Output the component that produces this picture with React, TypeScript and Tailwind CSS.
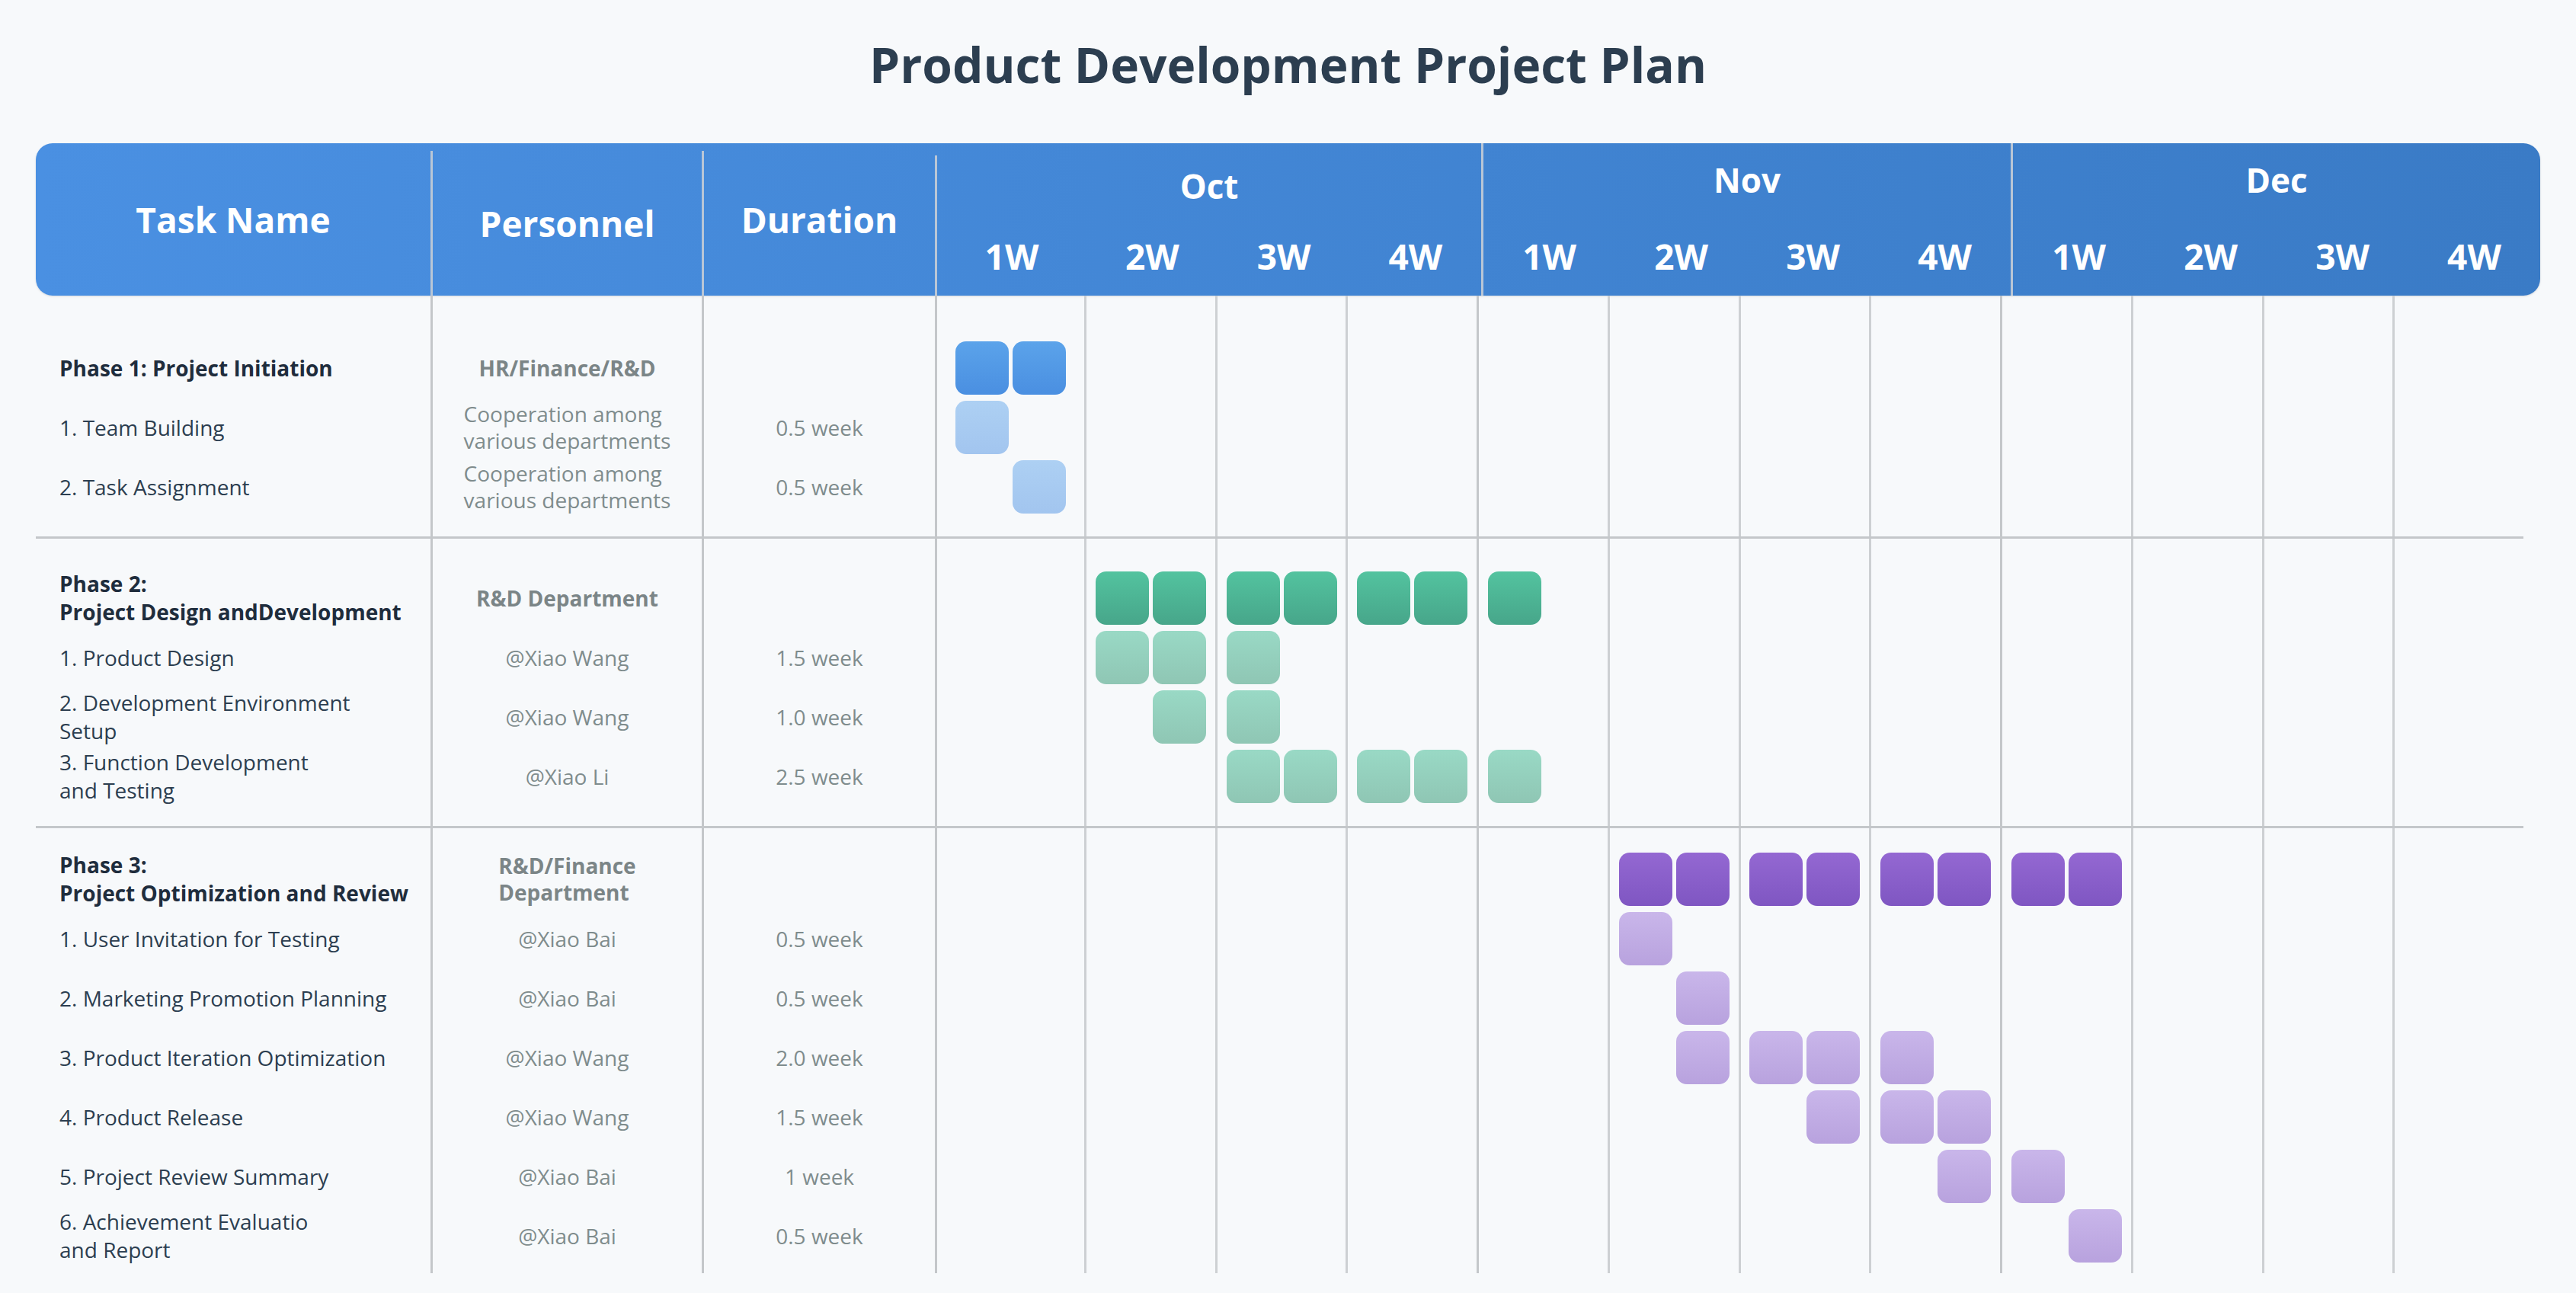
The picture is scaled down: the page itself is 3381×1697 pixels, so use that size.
type Row = { task: string; person: string; dur?: string; phase?: boolean; slots: number[] };
type Section = { dark: string; light: string; pad: string; rows: Row[] };

const SECTIONS: Section[] = [
  {
    dark: "bg-gradient-to-b from-[#5ba3ea] to-[#4a8fe1]",
    light: "bg-gradient-to-b from-[#add0f3] to-[#a2c5ef]",
    pad: "pt-[56px] pb-[26px]",
    rows: [
      { task: "Phase 1: Project Initiation", person: "HR/Finance/R&D", phase: true, slots: [0, 1] },
      { task: "1. Team Building", person: "Cooperation among\nvarious departments", dur: "0.5 week", slots: [0] },
      { task: "2. Task Assignment", person: "Cooperation among\nvarious departments", dur: "0.5 week", slots: [1] },
    ],
  },
  {
    dark: "bg-gradient-to-b from-[#53c39f] to-[#47a68a]",
    light: "bg-gradient-to-b from-[#99d9c5] to-[#8fc6b4]",
    pad: "pt-[39px] pb-[26px]",
    rows: [
      { task: "Phase 2:\nProject Design andDevelopment", person: "R&D Department", phase: true, slots: [2, 3, 4, 5, 6, 7, 8] },
      { task: "1. Product Design", person: "@Xiao Wang", dur: "1.5 week", slots: [2, 3, 4] },
      { task: "2. Development Environment\nSetup", person: "@Xiao Wang", dur: "1.0 week", slots: [3, 4] },
      { task: "3. Function Development\nand Testing", person: "@Xiao Li", dur: "2.5 week", slots: [4, 5, 6, 7, 8] },
    ],
  },
  {
    dark: "bg-gradient-to-b from-[#9468d2] to-[#7f56c2]",
    light: "bg-gradient-to-b from-[#c9b6ea] to-[#b8a2de]",
    pad: "pt-[28px] pb-[10px]",
    rows: [
      { task: "Phase 3:\nProject Optimization and Review", person: "R&D/Finance\nDepartment", phase: true, slots: [10, 11, 12, 13, 14, 15, 16, 17] },
      { task: "1. User Invitation for Testing", person: "@Xiao Bai", dur: "0.5 week", slots: [10] },
      { task: "2. Marketing Promotion Planning", person: "@Xiao Bai", dur: "0.5 week", slots: [11] },
      { task: "3. Product Iteration Optimization", person: "@Xiao Wang", dur: "2.0 week", slots: [11, 12, 13, 14] },
      { task: "4. Product Release", person: "@Xiao Wang", dur: "1.5 week", slots: [13, 14, 15] },
      { task: "5. Project Review Summary", person: "@Xiao Bai", dur: "1 week", slots: [15, 16] },
      { task: "6. Achievement Evaluatio\nand Report", person: "@Xiao Bai", dur: "0.5 week", slots: [17] },
    ],
  },
];

const GRID = "grid grid-cols-[518px_356px_306px_196px_repeat(11,1fr)]";
const WEEKS = ["1W", "2W", "3W", "4W"];

function Block({ cls }: { cls: string }) {
  return <div className={`h-[70px] w-[70px] rounded-[14px] ${cls}`} />;
}

export default function App() {
  return (
    <div
      className="w-[3381px] h-[1697px] overflow-hidden bg-[#f7f9fb] px-[47px]"
      style={{ fontFamily: '"Open Sans", "Noto Sans", sans-serif' }}
    >
      <h1 className="h-[188px] pb-[18px] flex items-center justify-center text-[64px] font-bold text-[#2c3e50]">
        Product Development Project Plan
      </h1>

      <div className={`${GRID} h-[200px] rounded-[22px] bg-gradient-to-r from-[#4a90e2] to-[#3a7bc6] text-white font-bold shadow-sm`}>
        <div className="flex items-center justify-center text-[46px]">Task Name</div>
        <div className="flex items-center justify-center text-[46px] border-l-[3px] border-[#b9c6d6] mt-[10px]">Personnel</div>
        <div className="flex items-center justify-center text-[46px] pb-[10px] border-l-[3px] border-[#b9c6d6] mt-[10px]">Duration</div>
        {["Oct", "Nov", "Dec"].map((m, mi) => (
          <div
            key={m}
            className={`${mi === 0 ? "col-span-4 mt-[16px]" : "col-span-4"} border-l-[3px] border-[#b9c6d6] grid grid-cols-4`}
            style={mi === 0 ? { gridTemplateColumns: "196px repeat(3, 1fr)" } : undefined}
          >
            <div className={`col-span-4 flex items-center justify-center text-[44px] ${mi === 0 ? "h-[80px]" : "h-[96px]"}`}>{m}</div>
            {WEEKS.map((w) => (
              <div key={w} className="flex items-center justify-center text-[46px] h-[80px]">{w}</div>
            ))}
          </div>
        ))}
      </div>

      {SECTIONS.map((s, si) => (
        <div key={si} className={`${GRID} ${si < 2 ? "border-b-[3px] border-[#c4c7ca]" : ""} mx-[22px] -ml-0`}>
          {/* column fillers with vertical lines via row cells */}
          {s.rows.map((r, ri) => {
            const first = ri === 0;
            const last = ri === s.rows.length - 1;
            const padCls = first ? s.pad.split(" ")[0] : last ? s.pad.split(" ")[1] : "";
            return [
              <div key={`t${ri}`} className={`${padCls} pl-[31px] flex items-center`}>
                <div
                  className={`h-[78px] flex flex-col justify-center whitespace-pre-line leading-[37px] text-[28px] ${
                    r.phase ? "font-bold text-[#1f2d3d]" : "text-[#2c3e50]"
                  }`}
                >
                  {r.task}
                </div>
              </div>,
              <div key={`p${ri}`} className={`${padCls} border-l-[3px] border-[#c4c7ca] flex items-center justify-center`}>
                <div
                  className={`h-[78px] flex flex-col justify-center whitespace-pre-line leading-[35px] text-[28px] ${
                    r.phase ? "font-bold text-[#7b8587] text-left" : "text-[#7f8c8d] text-left"
                  }`}
                >
                  {r.person}
                </div>
              </div>,
              <div key={`d${ri}`} className={`${padCls} border-l-[3px] border-[#c4c7ca] flex items-center justify-center`}>
                <div className="h-[78px] flex items-center text-[28px] text-[#7f8c8d]">{r.dur ?? ""}</div>
              </div>,
              ...Array.from({ length: 12 }).map((_, wi) => (
                <div
                  key={`w${ri}-${wi}`}
                  className={`${padCls} border-l-[3px] ${wi % 4 === 0 ? "border-[#c4c7ca]" : "border-[#cdd0d3]"} flex items-center justify-center`}
                >
                  <div className="h-[78px] flex items-center gap-[5px]">
                    {[wi * 2, wi * 2 + 1].map((slot) =>
                      r.slots.includes(slot) ? (
                        <Block key={slot} cls={r.phase ? s.dark : s.light} />
                      ) : (
                        <div key={slot} className="w-[70px]" />
                      ),
                    )}
                  </div>
                </div>
              )),
            ];
          })}
        </div>
      ))}
    </div>
  );
}
